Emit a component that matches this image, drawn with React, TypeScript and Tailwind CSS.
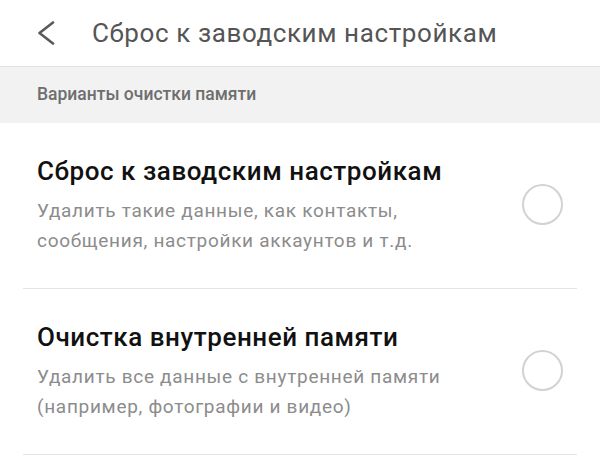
import React from 'react';

const items = [
  {
    title: 'Сброс к заводским настройкам',
    lines: ['Удалить такие данные, как контакты,', 'сообщения, настройки аккаунтов и т.д.'],
  },
  {
    title: 'Очистка внутренней памяти',
    lines: ['Удалить все данные с внутренней памяти', '(например, фотографии и видео)'],
  },
];

const App: React.FC = () => {
  return (
    <div className="w-[600px] h-[457px] bg-white overflow-hidden font-['Roboto',sans-serif]">
      <div className="h-[67px] flex items-center border-b border-[#e2e2e2]">
        <svg className="ml-[37px] w-[18px] h-[24px]" viewBox="0 0 18 24" fill="none">
          <path d="M16 1.5 L2.5 12 L16 22.5" stroke="#5a5a5a" strokeWidth="2.6" strokeLinecap="round" strokeLinejoin="round" />
        </svg>
        <span className="ml-[37px] text-[26px] tracking-[0.6px] text-[#555555] leading-none">Сброс к заводским настройкам</span>
      </div>

      <div className="h-[56px] bg-[#f2f2f2] flex items-center px-[37px]">
        <span className="text-[17.5px] font-medium text-[#6e6e6e] leading-none">Варианты очистки памяти</span>
      </div>

      {items.map((item) => (
        <div key={item.title} className="mx-[23px] border-b border-[#e4e4e4] h-[166px] flex items-center justify-between pl-[14px] pr-[14px]">
          <div>
            <div className="text-[26px] tracking-[0.55px] font-medium text-[#111111] leading-[32px]">{item.title}</div>
            <div className="mt-[9px] text-[19px] tracking-[0.7px] text-[#8c8c8c] leading-[30px]">
              {item.lines.map((l) => (
                <div key={l}>{l}</div>
              ))}
            </div>
          </div>
          <div className="w-[41px] h-[41px] rounded-full border-2 border-[#d2d2d2] mt-[-2px]" />
        </div>
      ))}
    </div>
  );
};

export default App;
